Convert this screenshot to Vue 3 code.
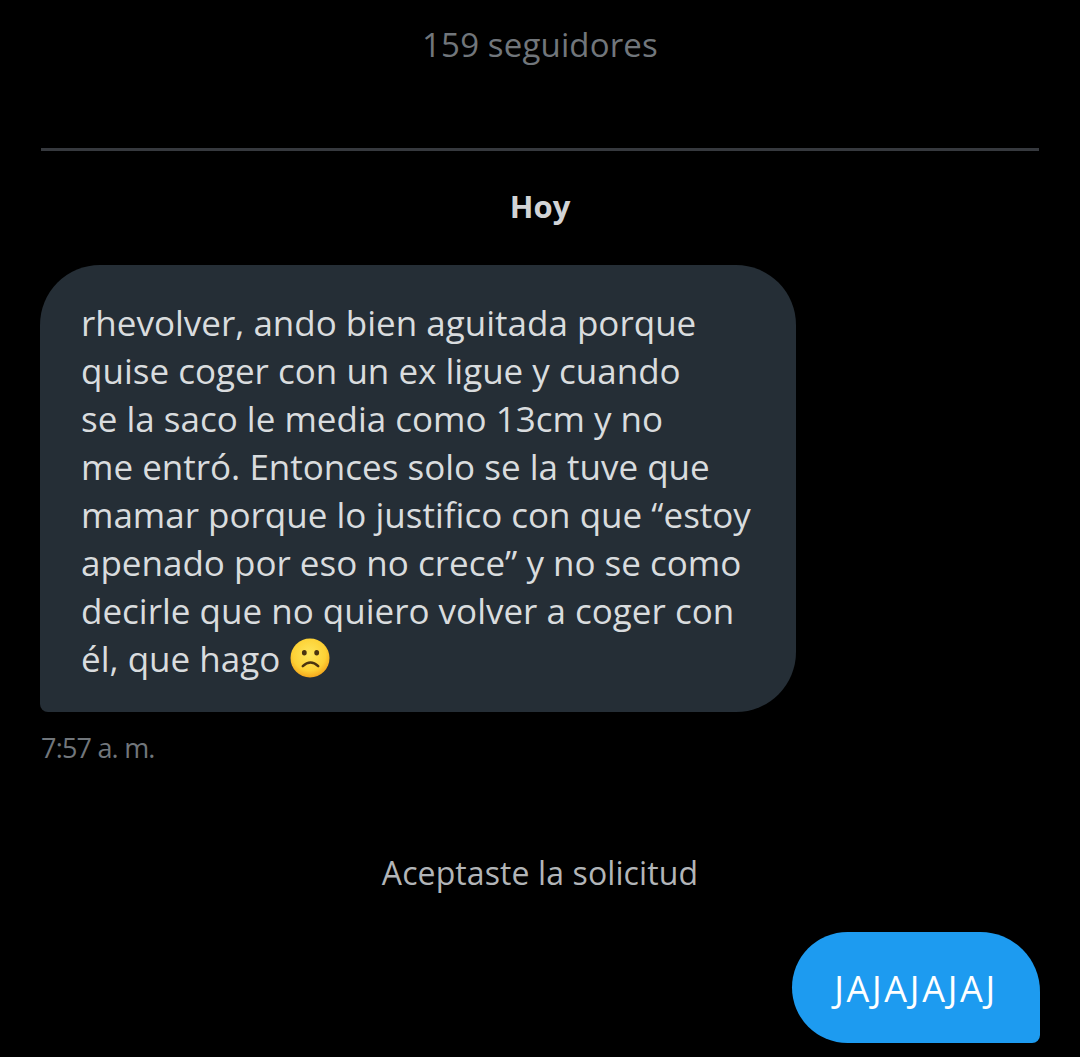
<script setup>
const lines = [
  'rhevolver, ando bien aguitada porque',
  'quise coger con un ex ligue y cuando',
  'se la saco le media como 13cm y no',
  'me entró. Entonces solo se la tuve que',
  'mamar porque lo justifico con que “estoy',
  'apenado por eso no crece” y no se como',
  'decirle que no quiero volver a coger con'
]
</script>

<template>
  <div class="chat">
    <div class="followers">159 seguidores</div>
    <div class="divider"></div>
    <div class="day">Hoy</div>

    <div class="bubble">
      <div v-for="line in lines" :key="line" class="line">{{ line }}</div>
      <div class="line last">
        él, que hago
        <svg class="emoji" viewBox="0 0 40 40" width="40" height="40">
          <defs>
            <radialGradient id="face" cx="48%" cy="40%" r="62%">
              <stop offset="0%" stop-color="#fee65c" />
              <stop offset="68%" stop-color="#fdd135" />
              <stop offset="100%" stop-color="#f3a21a" />
            </radialGradient>
          </defs>
          <circle cx="20" cy="20" r="19.5" fill="url(#face)" />
          <ellipse cx="14.3" cy="14.7" rx="2.4" ry="2.7" fill="#4a3410" />
          <ellipse cx="26.7" cy="14.7" rx="2.4" ry="2.7" fill="#4a3410" />
          <path d="M12.8 28.2 Q20.5 20.8 28.2 28.2" fill="none" stroke="#4a3410" stroke-width="2.5" stroke-linecap="round" />
        </svg>
      </div>
    </div>
    <div class="time">7:57 a. m.</div>

    <div class="notice">Aceptaste la solicitud</div>

    <div class="outgoing">
      <div class="sent">JAJAJAJAJ</div>
    </div>
  </div>
</template>

<style scoped>
.chat {
  width: 1080px;
  height: 1057px;
  overflow: hidden;
  background: #000;
  font-family: "Open Sans", "Noto Sans", sans-serif;
}

.followers {
  padding-top: 24px;
  height: 148px;
  box-sizing: border-box;
  line-height: 42px;
  font-size: 33px;
  letter-spacing: 0.15px;
  text-align: center;
  color: #71767b;
}

.divider {
  height: 3px;
  margin: 0 41px;
  background: #36393e;
}

.day {
  margin-top: 36px;
  line-height: 38px;
  font-size: 31px;
  font-weight: 700;
  text-align: center;
  color: #d2d4d6;
}

.bubble {
  box-sizing: border-box;
  width: 756px;
  height: 447px;
  margin: 40px 0 0 40px;
  padding: 34px 0 0 41px;
  border-radius: 60px 60px 60px 8px;
  background: #252e36;
  color: #d9dcde;
  font-size: 35px;
  line-height: 48px;
}

.line {
  white-space: nowrap;
}

.last {
  display: flex;
  align-items: center;
  gap: 10px;
}

.emoji {
  flex: none;
  margin-top: -2px;
}

.time {
  margin: 18px 0 0 41px;
  line-height: 36px;
  font-size: 27px;
  letter-spacing: -0.8px;
  color: #71767b;
}

.notice {
  margin-top: 85px;
  line-height: 44px;
  font-size: 32px;
  letter-spacing: 0.1px;
  text-align: center;
  color: #b2b5b8;
}

.outgoing {
  display: flex;
  justify-content: flex-end;
  margin-top: 37px;
  padding-right: 40px;
}

.sent {
  box-sizing: border-box;
  width: 248px;
  height: 111px;
  line-height: 114px;
  text-align: center;
  border-radius: 56px 60px 8px 56px;
  background: #1d9bf0;
  color: #fff;
  font-size: 36px;
  letter-spacing: 2.7px;
}
</style>
